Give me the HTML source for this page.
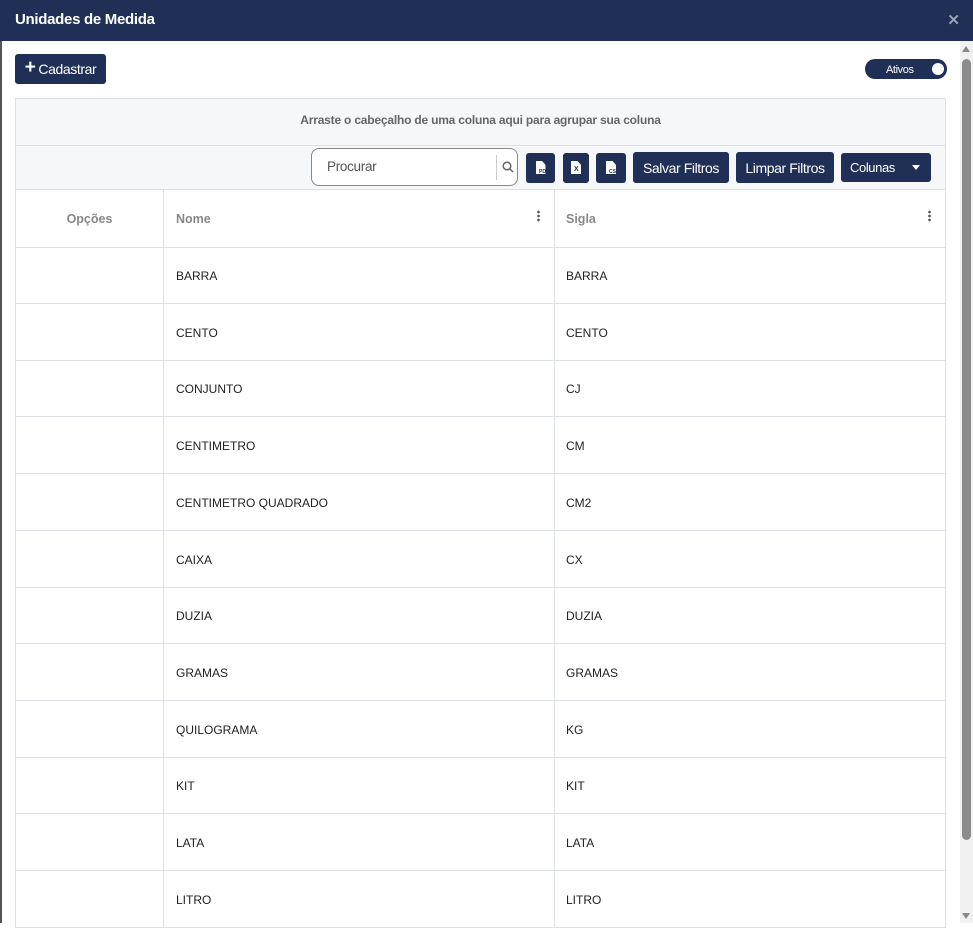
<!DOCTYPE html>
<html><head><meta charset="utf-8"><style>
*{box-sizing:border-box;margin:0;padding:0}
body{width:973px;height:923px;overflow:hidden;background:#fff;font-family:"Liberation Sans",sans-serif;position:relative}
.hdr{position:absolute;left:0;top:0;width:973px;height:41px;background:#1f2f55;color:#fff}
.hdr .t{position:absolute;left:15px;top:11px;font-size:15px;font-weight:bold;letter-spacing:-0.3px}
.hdr .x{position:absolute;right:13px;top:11px;font-size:15px;color:#9aa3b5;font-weight:bold}
.strip{position:absolute;left:0;top:41px;width:2px;height:882px;background:#555}
.btn{position:absolute;background:#1f2f55;color:#fff;border-radius:3px;font-size:14px;letter-spacing:-0.4px;display:flex;align-items:center;justify-content:center}
.grid{position:absolute;left:15px;top:98px;width:931px;height:830px;border:1px solid #dde1e6}
.grp{position:absolute;left:0;top:0;width:929px;height:47px;background:#f6f7f9;border-bottom:1px solid #dde1e6;text-align:center;font-size:12px;color:#666;font-weight:bold;line-height:42px;letter-spacing:-0.2px}
.tb{position:absolute;left:0;top:47px;width:929px;height:44px;background:#f6f7f9;border-bottom:1px solid #dde1e6}
.row{position:absolute;left:0;width:929px;border-bottom:1px solid #dde1e6;font-size:12px;color:#222}
.row div{position:absolute;top:0;height:100%;display:flex;align-items:center}
.c1{left:0;width:148px;border-right:1px solid #dde1e6;justify-content:center}
.c2{left:148px;width:391px;border-right:1px solid #dde1e6;padding-left:12px}
.c3{left:539px;width:390px;padding-left:11px}
.h{color:#888;font-weight:bold;font-size:12.5px}
.dots{position:absolute;width:3px;height:12px;top:22px;background:radial-gradient(circle,#555 1.2px,transparent 1.5px) 0 0/3px 4px}
.ic{position:absolute;top:153px;height:30px;background:#1f2f55;border-radius:3px}
.ic .p{position:absolute;left:50%;top:8px;margin-left:-5px;width:10px;height:13px;background:#fff;clip-path:polygon(0 0,65% 0,100% 30%,100% 100%,0 100%)}
.ic .l{position:absolute;top:16px;font-size:5px;color:#1f2f55;font-weight:bold}
.sb{position:absolute;left:960px;top:41px;width:13px;height:882px;background:#f1f1f1}
.th{position:absolute;left:962px;top:59px;width:9px;height:781px;background:#8c8c8c;border-radius:5px}
</style></head><body>
<div class="hdr"><div class="t">Unidades de Medida</div><div class="x">✕</div></div>
<div class="strip"></div>
<div class="btn" style="left:15px;top:54px;width:91px;height:30px;font-size:14px"><span style="font-size:19px;font-weight:bold;margin-right:3px;margin-top:-2px">+</span>Cadastrar</div>
<div class="btn" style="left:865px;top:59px;width:82px;height:20px;border-radius:10px;font-size:11px;justify-content:flex-start;padding-left:21px;padding-top:2px">Ativos<span style="position:absolute;right:3px;top:4px;width:12px;height:12px;border-radius:50%;background:#fff"></span></div>
<div class="grid">
<div class="grp">Arraste o cabeçalho de uma coluna aqui para agrupar sua coluna</div>
<div class="tb"></div>
<div class="row" style="top:91px;height:58px"><div class="c1 h">Opções</div><div class="c2 h">Nome</div><div class="c3 h">Sigla</div></div>
</div>
<div class="dots" style="left:537px;top:210px"></div>
<div class="dots" style="left:928px;top:210px"></div>
<div style="position:absolute;left:311px;top:148px;width:207px;height:38px;border:1px solid #888;border-radius:8px;background:#fff;font-size:13.5px;color:#555;padding:10px 0 0 15px;letter-spacing:-0.3px">Procurar<span style="position:absolute;left:184px;top:6px;width:1px;height:25px;background:#ccc"></span><svg style="position:absolute;left:190px;top:12px" width="12" height="12" viewBox="0 0 12 12"><circle cx="5" cy="5" r="3.8" fill="none" stroke="#666" stroke-width="1.5"/><path d="M8 8L11 11" stroke="#666" stroke-width="1.5"/></svg></div>
<div class="ic" style="left:526px;width:29px"><div class="p"></div><span class="l" style="left:13px">PDF</span></div>
<div class="ic" style="left:563px;width:26px"><div class="p"></div><span class="l" style="left:11px;font-size:7px;top:13px">X</span></div>
<div class="ic" style="left:596px;width:30px"><div class="p"></div><span class="l" style="left:13px">CSV</span></div>
<div class="btn" style="left:633px;top:152px;width:96px;height:31px">Salvar Filtros</div>
<div class="btn" style="left:736px;top:152px;width:98px;height:31px">Limpar Filtros</div>
<div class="btn" style="left:841px;top:153px;width:90px;height:29px;font-size:13px;justify-content:flex-start;padding-left:9px">Colunas<span style="position:absolute;right:11px;top:12px;border:4px solid transparent;border-top:5px solid #fff"></span></div>
<div id="rows"></div>
<div class="sb"></div><div class="th"></div>
<div style="position:absolute;left:962px;top:46px;border:4.5px solid transparent;border-bottom:6px solid #888;border-top:0"></div>
<div style="position:absolute;left:962px;top:913px;border:4.5px solid transparent;border-top:6px solid #888;border-bottom:0"></div>
<script>
var d=[["BARRA","BARRA"],["CENTO","CENTO"],["CONJUNTO","CJ"],["CENTIMETRO","CM"],["CENTIMETRO QUADRADO","CM2"],["CAIXA","CX"],["DUZIA","DUZIA"],["GRAMAS","GRAMAS"],["QUILOGRAMA","KG"],["KIT","KIT"],["LATA","LATA"],["LITRO","LITRO"]];
var h="";d.forEach(function(r,i){var t=247+i*56.7;h+='<div class="row" style="left:16px;top:'+t+'px;height:57px;padding-top:1px"><div class="c1"></div><div class="c2" style="padding-top:2px">'+r[0]+'</div><div class="c3" style="padding-top:2px">'+r[1]+'</div></div>';});
document.getElementById("rows").innerHTML=h;
</script>
</body></html>
